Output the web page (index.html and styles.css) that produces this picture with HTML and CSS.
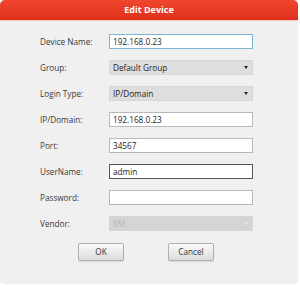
FILE: index.html
```
<!DOCTYPE html>
<html>
<head>
<meta charset="utf-8">
<link rel="stylesheet" href="styles.css">
</head>
<body>
<div class="dialog">
  <div class="header">Edit Device</div>
  <div class="form">
    <div class="label">Device Name:</div>
    <div class="field input focus">192.168.0.23</div>
    <div class="label">Group:</div>
    <div class="field select">Default Group<span class="arrow"></span></div>
    <div class="label">Login Type:</div>
    <div class="field select">IP/Domain<span class="arrow"></span></div>
    <div class="label">IP/Domain:</div>
    <div class="field input">192.168.0.23</div>
    <div class="label">Port:</div>
    <div class="field input">34567</div>
    <div class="label">UserName:</div>
    <div class="field input dark">admin</div>
    <div class="label">Password:</div>
    <div class="field input"></div>
    <div class="label">Vendor:</div>
    <div class="field select disabled">XM<span class="arrow"></span></div>
  </div>
  <div class="buttons">
    <div class="btn ok">OK</div>
    <div class="btn cancel">Cancel</div>
  </div>
</div>
</body>
</html>
```
FILE: styles.css
```
html, body {
  margin: 0;
  padding: 0;
  background: #ffffff;
}
body {
  font-family: "Open Sans", "Noto Sans", sans-serif;
  font-size: 8.2px;
  color: #333;
}
.dialog {
  width: 298px;
  height: 284px;
  background: #f0f0f0;
  border-radius: 5px;
  overflow: hidden;
  box-shadow: 0 0 1px rgba(0,0,0,0.15);
}
.header {
  height: 20px;
  line-height: 20px;
  background: linear-gradient(#f0462e, #e0301c);
  color: #fff;
  font-weight: bold;
  font-size: 9px;
  text-align: center;
  border-bottom: 1px solid #f6c8c0;
}
.form {
  display: grid;
  grid-template-columns: 69px 144px;
  grid-auto-rows: 15px;
  row-gap: 11px;
  margin-top: 13px;
  padding-left: 40px;
}
.label {
  line-height: 15px;
  color: #3a3a3a;
}
.field {
  box-sizing: border-box;
  height: 15px;
  line-height: 13px;
  padding-left: 3px;
  position: relative;
  color: #222;
}
.input {
  background: #fff;
  border: 1px solid #b8b8b8;
}
.input.focus {
  border-color: #7eb4d4;
}
.input.dark {
  border-color: #555;
}
.select {
  background: #dedede;
  border: 1px solid #d6d6d6;
}
.select.disabled {
  background: #d4d4d4;
  color: #b4b4b4;
}
.arrow {
  position: absolute;
  right: 4px;
  top: 5px;
  width: 0;
  height: 0;
  border-left: 2.5px solid transparent;
  border-right: 2.5px solid transparent;
  border-top: 3px solid #222;
}
.disabled .arrow {
  border-top-color: #e8e8e8;
}
.buttons {
  display: flex;
  margin-top: 12px;
  padding-left: 78px;
  gap: 44px;
}
.btn {
  box-sizing: border-box;
  width: 46px;
  height: 18px;
  line-height: 16px;
  text-align: center;
  border: 1px solid #b0b0b0;
  border-radius: 2px;
  background: linear-gradient(#fafafa, #dcdcdc);
  color: #333;
  box-shadow: 0 1px 1px rgba(0,0,0,0.1);
}
```
